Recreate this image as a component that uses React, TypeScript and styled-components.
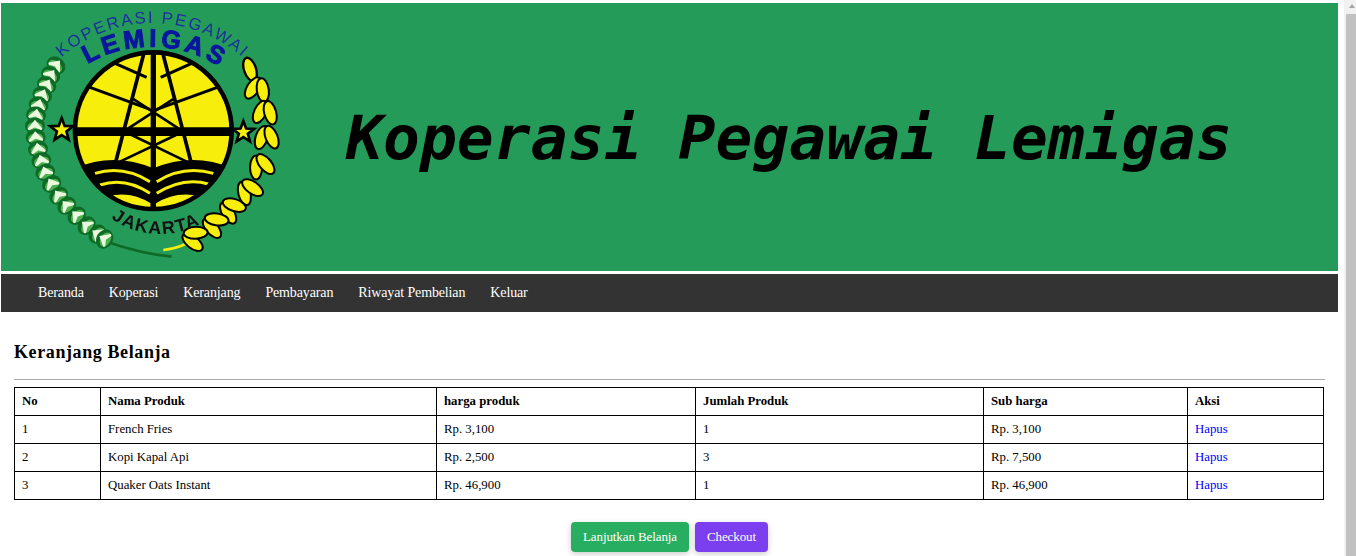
import styled, { createGlobalStyle } from "styled-components";

const GlobalStyle = createGlobalStyle`
  body {
    margin: 3px 18px 0 1px;
    background: #fff;
    font-family: "Liberation Serif", "Times New Roman", serif;
    color: #000;
  }
`;

const Banner = styled.header`
  display: flex;
  align-items: center;
  height: 268px;
  background: #259b5a;
  overflow: hidden;
`;

const LogoSvg = styled.svg`
  flex: none;
  width: 300px;
  height: 268px;
  filter: blur(0.45px);
`;

const BannerTitle = styled.h1`
  margin: 0 0 0 45px;
  font-family: "DejaVu Sans Mono", "Liberation Mono", monospace;
  font-size: 61.2px;
  font-weight: 700;
  font-style: italic;
  letter-spacing: 0.1px;
  white-space: nowrap;
  color: #000;
  filter: blur(0.35px);
`;

const NavBar = styled.nav`
  display: flex;
  gap: 25px;
  align-items: center;
  height: 38px;
  margin-top: 3px;
  padding-left: 37px;
  background: #333;
`;

const NavLink = styled.a`
  color: #fff;
  font-size: 14px;
  letter-spacing: -0.13px;
  text-decoration: none;
`;

const Content = styled.main`
  padding: 30px 13px 0;
`;

const Heading = styled.h2`
  margin: 0;
  font-size: 18px;
  line-height: 20px;
  font-weight: 700;
  letter-spacing: 0.6px;
`;

const Rule = styled.hr`
  margin: 17px 0 7px;
  border: 0;
  border-top: 1px solid #aaa;
`;

const CartTable = styled.table`
  width: 1310px;
  table-layout: fixed;
  border-collapse: collapse;
  font-size: 12.8px;
`;

const HeadCell = styled.th`
  height: 26px;
  padding: 0 7px 1px;
  border: 1px solid #000;
  text-align: left;
  font-weight: 700;
`;

const Cell = styled.td`
  height: 26px;
  padding: 0 7px 1px;
  border: 1px solid #000;
`;

const RemoveLink = styled.a`
  color: #00f;
  text-decoration: none;
`;

const Actions = styled.div`
  display: flex;
  justify-content: center;
  gap: 6px;
  margin-top: 22px;
  padding-bottom: 12px;
`;

const ActionButton = styled.a<{ $bg: string }>`
  display: block;
  padding: 0 12px;
  line-height: 30px;
  border-radius: 4px;
  background: ${(p) => p.$bg};
  color: #fff;
  font-size: 13px;
  letter-spacing: -0.1px;
  text-decoration: none;
  box-shadow: 0 2px 6px rgba(0, 0, 0, 0.2);
`;

// the browser's scrollbar, painted over the right edge of the page
const ScrollTrack = styled.div`
  position: fixed;
  top: 0;
  right: 0;
  bottom: 0;
  width: 12px;
  background: #f1f1f1;
`;

const ScrollArrow = styled.div`
  position: absolute;
  top: 4px;
  left: 5px;
  width: 0;
  height: 0;
  border-left: 3.5px solid transparent;
  border-right: 3.5px solid transparent;
  border-bottom: 4px solid #a3a3a3;
`;

const ScrollThumb = styled.div`
  position: absolute;
  top: 14px;
  right: 0;
  bottom: 0;
  width: 10px;
  background: #c1c1c1;
`;

const columns = [86, 336, 259, 288, 204, 136];

const headers = ["No", "Nama Produk", "harga produk", "Jumlah Produk", "Sub harga", "Aksi"];

const rows = [
  { no: 1, name: "French Fries", price: "Rp. 3,100", qty: 1, sub: "Rp. 3,100" },
  { no: 2, name: "Kopi Kapal Api", price: "Rp. 2,500", qty: 3, sub: "Rp. 7,500" },
  { no: 3, name: "Quaker Oats Instant", price: "Rp. 46,900", qty: 1, sub: "Rp. 46,900" },
];

const navItems = ["Beranda", "Koperasi", "Keranjang", "Pembayaran", "Riwayat Pembelian", "Keluar"];

// wreath nodes, in the logo's own coordinates
const greenLeaves = [
  [168, 196, 40], [152, 225, 35], [140, 255, 30], [127, 285, 25], [116, 315, 15], [108, 345, 10],
  [105, 378, 0], [107, 412, -5], [114, 447, -10], [124, 482, -15], [136, 517, -20], [155, 552, -30],
  [176, 587, -35], [200, 617, -40], [230, 647, -45], [260, 677, -50], [292, 702, -55], [314, 717, -60],
];
const yellowLeaves = [
  [772, 275, 12], [795, 345, 5], [800, 420, -2], [785, 505, -20],
  [750, 578, -35], [700, 632, -52], [650, 675, -62], [590, 715, -72],
];

function starPoints(cx: number, cy: number, r: number) {
  const pts: string[] = [];
  for (let i = 0; i < 10; i++) {
    const rad = i % 2 ? r * 0.42 : r;
    const a = (-90 + i * 36) * (Math.PI / 180);
    pts.push(`${cx + rad * Math.cos(a)},${cy + rad * Math.sin(a)}`);
  }
  return pts.join(" ");
}

function Logo() {
  return (
    <LogoSvg viewBox="3 9 900 804">
      <defs>
        <clipPath id="disc">
          <circle cx="460" cy="392" r="235" />
        </clipPath>
        <path id="arcOuter" d="M 185 172 A 410 410 0 0 1 728 172" />
        <path id="arcMiddle" d="M 262 192 A 381 381 0 0 1 645 192" />
        <path id="arcBottom" d="M 333 655 A 255 255 0 0 0 600 672" />
      </defs>

      <circle cx="460" cy="392" r="235" fill="#f7ee0c" />
      <g clipPath="url(#disc)" stroke="#000" fill="none">
        <path strokeWidth="9" d="M340 188 L440 232 M580 188 L482 232 M270 262 L450 328 M652 262 L470 328" />
        <path strokeWidth="11" d="M432 158 L348 482 M488 158 L572 482" />
        <path strokeWidth="8" d="M398 296 L535 385 M522 296 L385 385 M395 405 L560 485 M528 405 L360 485" />
        <path strokeWidth="26" d="M225 395 H697" />
        <path
          fill="#000"
          stroke="none"
          d="M225 505 Q340 455 460 505 Q580 455 697 505 V640 H225 Z"
        />
        <path
          stroke="#f7ee0c"
          strokeWidth="9"
          d="M285 520 Q370 495 450 545 M470 545 Q550 495 640 520 M300 555 Q375 530 450 580 M470 580 Q550 530 625 552"
        />
        <path
          fill="#f7ee0c"
          stroke="none"
          d="M320 590 Q390 570 452 610 V640 H320 Z M468 610 Q530 570 605 590 V640 H468 Z"
        />
        <path strokeWidth="16" d="M460 150 V632" />
      </g>
      <circle cx="460" cy="392" r="235" fill="none" stroke="#000" strokeWidth="14" />

      <polygon points={starPoints(185, 390, 36)} fill="#f7ee0c" stroke="#000" strokeWidth="8" />
      <polygon points={starPoints(730, 397, 34)} fill="#f7ee0c" stroke="#000" strokeWidth="8" />

      <path d="M320 725 Q420 760 515 770" fill="none" stroke="#0d6b25" strokeWidth="8" />
      <path d="M490 750 Q540 745 590 715" fill="none" stroke="#f7ee0c" strokeWidth="8" />

      {greenLeaves.map(([x, y, a]) => (
        <g key={`${x}-${y}`} transform={`translate(${x} ${y}) rotate(${a})`}>
          <ellipse rx="30" ry="25" fill="#0d6b25" />
          <ellipse cy="3" rx="23" ry="15" fill="#4caf50" />
          <path d="M-20 10 L0 -14 L20 10 L0 1 Z" fill="#eaf8de" stroke="#eaf8de" strokeWidth="6" />
        </g>
      ))}

      <g transform="translate(750 208) rotate(-18)">
        <ellipse rx="18" ry="36" fill="#f7ee0c" stroke="#000" strokeWidth="7" />
      </g>
      {yellowLeaves.map(([x, y, a]) => (
        <g key={`${x}-${y}`} transform={`translate(${x} ${y}) rotate(${a})`}>
          <ellipse cx="-15" cy="-8" rx="18" ry="36" transform="rotate(20 -15 -8)" fill="#f7ee0c" stroke="#000" strokeWidth="6" />
          <ellipse cx="15" cy="-8" rx="18" ry="36" transform="rotate(-20 15 -8)" fill="#f7ee0c" stroke="#000" strokeWidth="6" />
        </g>
      ))}

      <text fontFamily="'Liberation Sans', sans-serif" fontSize="50" fill="#1c2ea0">
        <textPath href="#arcOuter" textLength="590">
          KOPERASI PEGAWAI
        </textPath>
      </text>
      <text
        fontFamily="'Liberation Sans', sans-serif"
        fontSize="76"
        fontWeight="700"
        fill="#0a169e"
        stroke="#0a169e"
        strokeWidth="3"
      >
        <textPath href="#arcMiddle" textLength="415">
          LEMIGAS
        </textPath>
      </text>
      <text fontFamily="'Liberation Sans', sans-serif" fontSize="54" fontWeight="700" fill="#111">
        <textPath href="#arcBottom" textLength="280">
          JAKARTA
        </textPath>
      </text>
    </LogoSvg>
  );
}

export default function App() {
  return (
    <>
      <GlobalStyle />
      <Banner>
        <Logo />
        <BannerTitle>Koperasi Pegawai Lemigas</BannerTitle>
      </Banner>
      <NavBar>
        {navItems.map((item) => (
          <NavLink key={item} href="#">
            {item}
          </NavLink>
        ))}
      </NavBar>
      <Content>
        <Heading>Keranjang Belanja</Heading>
        <Rule />
        <CartTable>
          <colgroup>
            {columns.map((w, i) => (
              <col key={i} width={w} />
            ))}
          </colgroup>
          <thead>
            <tr>
              {headers.map((h) => (
                <HeadCell key={h}>{h}</HeadCell>
              ))}
            </tr>
          </thead>
          <tbody>
            {rows.map((r) => (
              <tr key={r.no}>
                <Cell>{r.no}</Cell>
                <Cell>{r.name}</Cell>
                <Cell>{r.price}</Cell>
                <Cell>{r.qty}</Cell>
                <Cell>{r.sub}</Cell>
                <Cell>
                  <RemoveLink href="#">Hapus</RemoveLink>
                </Cell>
              </tr>
            ))}
          </tbody>
        </CartTable>
        <Actions>
          <ActionButton href="#" $bg="#27ae60">
            Lanjutkan Belanja
          </ActionButton>
          <ActionButton href="#" $bg="#7c3fef">
            Checkout
          </ActionButton>
        </Actions>
      </Content>
      <ScrollTrack>
        <ScrollArrow />
        <ScrollThumb />
      </ScrollTrack>
    </>
  );
}
